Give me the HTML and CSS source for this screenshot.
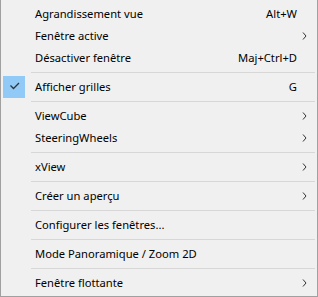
FILE: index.html
```html
<!DOCTYPE html>
<html lang="fr">
<head>
    <meta charset="UTF-8">
    <title>Menu</title>
    <link rel="stylesheet" href="styles.css">
</head>
<body>
    <div class="menu">
        <div class="item"><span class="icon"></span><span class="label">Agrandissement vue</span><span class="key">Alt+W</span><span class="sub"></span></div>
        <div class="item"><span class="icon"></span><span class="label">Fenêtre active</span><span class="key"></span><span class="sub"><svg width="5" height="8" viewBox="0 0 5 8"><path d="M1 0.5 L4 4 L1 7.5" /></svg></span></div>
        <div class="item"><span class="icon"></span><span class="label">Désactiver fenêtre</span><span class="key">Maj+Ctrl+D</span><span class="sub"></span></div>
        <div class="sep"></div>
        <div class="item"><span class="icon checked"><svg width="22" height="22" viewBox="0 0 22 22"><path d="M7.5 9.5 L10.5 12.5 L16 7" /></svg></span><span class="label">Afficher grilles</span><span class="key">G</span><span class="sub"></span></div>
        <div class="sep"></div>
        <div class="item"><span class="icon"></span><span class="label">ViewCube</span><span class="key"></span><span class="sub"><svg width="5" height="8" viewBox="0 0 5 8"><path d="M1 0.5 L4 4 L1 7.5" /></svg></span></div>
        <div class="item"><span class="icon"></span><span class="label">SteeringWheels</span><span class="key"></span><span class="sub"><svg width="5" height="8" viewBox="0 0 5 8"><path d="M1 0.5 L4 4 L1 7.5" /></svg></span></div>
        <div class="sep"></div>
        <div class="item"><span class="icon"></span><span class="label">xView</span><span class="key"></span><span class="sub"><svg width="5" height="8" viewBox="0 0 5 8"><path d="M1 0.5 L4 4 L1 7.5" /></svg></span></div>
        <div class="sep"></div>
        <div class="item"><span class="icon"></span><span class="label">Créer un aperçu</span><span class="key"></span><span class="sub"><svg width="5" height="8" viewBox="0 0 5 8"><path d="M1 0.5 L4 4 L1 7.5" /></svg></span></div>
        <div class="sep"></div>
        <div class="item"><span class="icon"></span><span class="label">Configurer les fenêtres...</span><span class="key"></span><span class="sub"></span></div>
        <div class="sep"></div>
        <div class="item"><span class="icon"></span><span class="label">Mode Panoramique / Zoom 2D</span><span class="key"></span><span class="sub"></span></div>
        <div class="sep"></div>
        <div class="item"><span class="icon"></span><span class="label">Fenêtre flottante</span><span class="key"></span><span class="sub"><svg width="5" height="8" viewBox="0 0 5 8"><path d="M1 0.5 L4 4 L1 7.5" /></svg></span></div>
    </div>
</body>
</html>
```

FILE: styles.css
```css
body {
    margin: 0;
    background-color: #f0f0f0;
    font-family: "Noto Sans", "Liberation Sans", sans-serif;
    font-size: 11.2px;
    color: #000;
}
.menu {
    width: 318px;
    height: 297px;
    box-sizing: border-box;
    background-color: #f0f0f0;
    border: 1px solid #a0a0a0;
    border-top: none;
    padding: 3px 0 2px 2px;
}
.item {
    display: grid;
    grid-template-columns: 22px 1fr auto 20px;
    align-items: center;
    height: 22px;
}
.icon {
    width: 22px;
    height: 22px;
}
.icon.checked {
    background-color: #91c9f7;
}
.icon svg path {
    fill: none;
    stroke: #333;
    stroke-width: 1.3;
}
.label {
    padding-left: 10px;
    padding-bottom: 2px;
    white-space: nowrap;
}
.key {
    text-align: right;
    padding-bottom: 2px;
    white-space: nowrap;
}
.sub {
    display: flex;
    align-items: center;
    padding-left: 5px;
}
.sub svg path {
    fill: none;
    stroke: #333;
    stroke-width: 1;
}
.sep {
    height: 1px;
    margin: 3px 2px 3px 28px;
    background-color: #d7d7d7;
}
```
